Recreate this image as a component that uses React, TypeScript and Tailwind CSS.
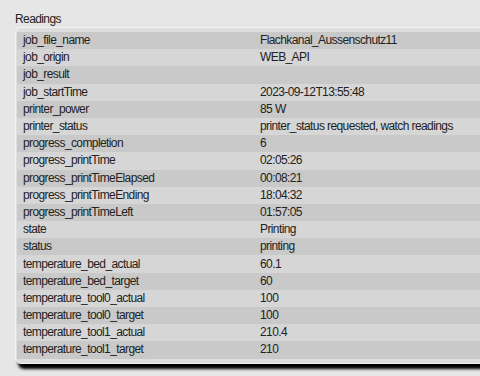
const readings: [string, string][] = [
  ["job_file_name", "Flachkanal_Aussenschutz11"],
  ["job_origin", "WEB_API"],
  ["job_result", ""],
  ["job_startTime", "2023-09-12T13:55:48"],
  ["printer_power", "85 W"],
  ["printer_status", "printer_status requested, watch readings"],
  ["progress_completion", "6"],
  ["progress_printTime", "02:05:26"],
  ["progress_printTimeElapsed", "00:08:21"],
  ["progress_printTimeEnding", "18:04:32"],
  ["progress_printTimeLeft", "01:57:05"],
  ["state", "Printing"],
  ["status", "printing"],
  ["temperature_bed_actual", "60.1"],
  ["temperature_bed_target", "60"],
  ["temperature_tool0_actual", "100"],
  ["temperature_tool0_target", "100"],
  ["temperature_tool1_actual", "210.4"],
  ["temperature_tool1_target", "210"],
];

export default function App() {
  return (
    <div className="h-[376px] w-[480px] overflow-hidden bg-[#e6e6e6] pt-[12px] pl-[15px] font-['Liberation_Sans',Arial,sans-serif] text-[12px] tracking-[-0.6px] text-[#222]">
      <div className="leading-[15px]">Readings</div>
      <div className="mr-[-30px] rounded-[6px] border border-[#f3f3f3] bg-[#dedede] pt-[4px] pb-[4px] pl-[1px] shadow-[3px_5px_3px_#000]">
        {readings.map(([name, value], i) => (
          <div
            key={name}
            className={
              i % 2 === 0
                ? "grid h-[17.2px] grid-cols-[237px_1fr] items-center bg-[#c9c9c9] leading-[15px]"
                : "grid h-[17.2px] grid-cols-[237px_1fr] items-center bg-[#d6d6d6] leading-[15px]"
            }
          >
            <span className="pl-[6px]">{name}</span>
            <span className="pl-[6px] whitespace-nowrap">{value}</span>
          </div>
        ))}
      </div>
    </div>
  );
}
